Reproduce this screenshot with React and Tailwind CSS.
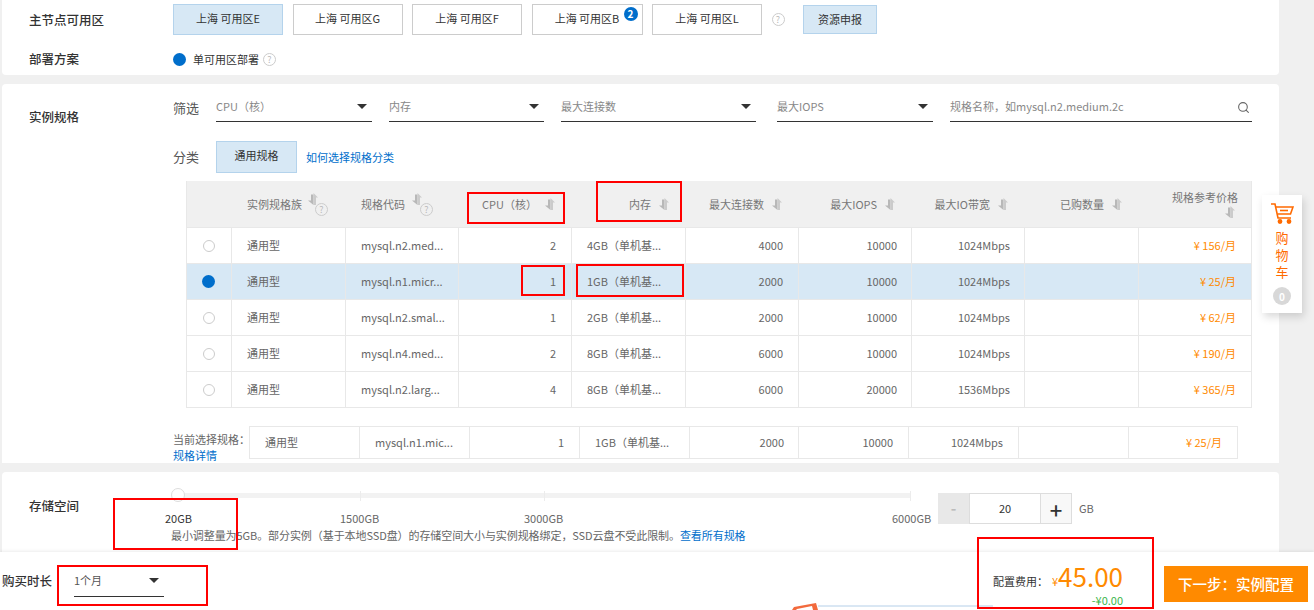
import React from "react";
import { Search } from "lucide-react";

const FONT = "font-['Noto_Sans_CJK_SC','Liberation_Sans',sans-serif]";

const zones = [
  { name: "上海 可用区E", active: true, w: "w-[110px]" },
  { name: "上海 可用区G", w: "w-[110px]" },
  { name: "上海 可用区F", w: "w-[110px]" },
  { name: "上海 可用区B", w: "w-[111px]", badge: true },
  { name: "上海 可用区L", w: "w-[110px]" },
];

const filters = [
  { label: "CPU（核）", w: "w-[156px]", gap: "mr-[17px]" },
  { label: "内存", w: "w-[155px]", gap: "mr-[17px]" },
  { label: "最大连接数", w: "w-[195px]", gap: "mr-[21px]" },
  { label: "最大IOPS", w: "w-[156px]", gap: "mr-[17px]" },
];

const rows = [
  ["通用型", "mysql.n2.med...", "2", "4GB（单机基...", "4000", "10000", "1024Mbps", "¥ 156/月"],
  ["通用型", "mysql.n1.micr...", "1", "1GB（单机基...", "2000", "10000", "1024Mbps", "¥ 25/月"],
  ["通用型", "mysql.n2.smal...", "1", "2GB（单机基...", "2000", "10000", "1024Mbps", "¥ 62/月"],
  ["通用型", "mysql.n4.med...", "2", "8GB（单机基...", "6000", "10000", "1024Mbps", "¥ 190/月"],
  ["通用型", "mysql.n2.larg...", "4", "8GB（单机基...", "6000", "20000", "1536Mbps", "¥ 365/月"],
];

const cols = "grid grid-cols-[45px_114px_113px_113px_114px_113px_113px_113px_114px_112px]";
const selCols = "grid grid-cols-[110px_110px_110px_110px_109px_110px_110px_110px_108px]";

function Help({ className = "" }) {
  return (
    <span className={`inline-flex h-[13px] w-[13px] shrink-0 items-center justify-center rounded-full border border-[#ccc] text-[9px] leading-none text-[#bbb] ${className}`}>
      ?
    </span>
  );
}

function Caret() {
  return <span className="block h-0 w-0 border-x-[5px] border-t-[5px] border-x-transparent border-t-[#333]" />;
}

function Sort({ className = "" }) {
  return (
    <svg width="10" height="13" viewBox="0 0 10 13" className={`block shrink-0 ${className}`}>
      <path d="M3 1.5h2.5V12L0 7.5h3z" fill="#b8b8b8" />
      <path d="M5.5 12V0L10 4.5H8V12z" fill="#cbcbcb" />
    </svg>
  );
}

function Annot({ className }) {
  return <div className={`absolute z-30 border-2 border-[#f00] ${className}`} />;
}

function Label({ children }) {
  return <div className="text-[12.5px] font-medium leading-5 text-[#333]">{children}</div>;
}

function HeadCell({ children, className = "" }) {
  return <div className={`flex h-[46px] items-center pl-[15px] pr-[17px] ${className}`}>{children}</div>;
}

export default function App() {
  return (
    <div className={`relative h-[610px] w-[1314px] overflow-hidden bg-[#f0f0f0] text-[11px] text-[#666] ${FONT}`}>
      <div className="ml-[2px] flex w-[1277px] flex-col gap-[9px]">
        {/* zone */}
        <section className="h-[75px] rounded-b bg-white pl-[27px]">
          <div className="flex pt-[4px]">
            <div className="w-[144px] pt-[6px]"><Label>主节点可用区</Label></div>
            <div className="flex items-center gap-[9.5px]">
              {zones.map((z) => (
                <div
                  key={z.name}
                  className={`relative flex h-[31px] items-center justify-center border pb-[3px] ${z.w} ${z.active ? "border-[#b4d3ec] bg-[#d7e8f5]" : "border-[#ccc] bg-white"} text-[#333]`}
                >
                  {z.name}
                  {z.badge && (
                    <span className="absolute right-[4px] top-[2px] flex h-[14px] w-[14px] items-center justify-center rounded-full bg-[#006ecb] text-[10px] font-bold leading-none text-white">2</span>
                  )}
                </div>
              ))}
              <Help />
              <div className="ml-[9px] flex h-[29px] w-[74px] items-center justify-center border border-[#b4d3ec] bg-[#d7e8f5] text-[#333]">资源申报</div>
            </div>
          </div>
          <div className="mt-[14px] flex items-center">
            <div className="w-[144px]"><Label>部署方案</Label></div>
            <span className="h-[13px] w-[13px] rounded-full bg-[#006ecb]" />
            <span className="ml-[7px] text-[#333]">单可用区部署</span>
            <Help className="ml-[4px]" />
          </div>
        </section>

        {/* spec */}
        <section className="h-[379px] rounded-t bg-white pl-[27px]">
          <div className="flex">
            <div className="w-[144px] pt-[23px]"><Label>实例规格</Label></div>
            <div className="w-[1079px]">
              <div className="flex items-end pt-[10px]">
                <span className="w-[43px] pb-[4px] text-[13px] leading-5 text-[#555]">筛选</span>
                {filters.map((f) => (
                  <div key={f.label} className={`flex h-[27px] items-start justify-between border-b border-[#333] pt-[3px] pr-[5px] ${f.w} ${f.gap} text-[#888]`}>
                    {f.label}
                    <span className="mt-[6px]"><Caret /></span>
                  </div>
                ))}
                <div className="flex h-[28px] w-[302px] items-start justify-between border-b border-[#333] pt-[4px] pr-[2px] text-[#888]">
                  规格名称，如mysql.n2.medium.2c
                  <Search size={13} strokeWidth={2} className="mt-[3px] text-[#666]" />
                </div>
              </div>
              <div className="mt-[19px] flex items-center">
                <span className="w-[43px] text-[13px] leading-5 text-[#555]">分类</span>
                <div className="flex h-[32px] w-[81px] items-center justify-center border border-[#b4d3ec] bg-[#d7e8f5] pb-[3px] text-[#333]">通用规格</div>
                <a className="ml-[9px] text-[#006ecb]">如何选择规格分类</a>
              </div>
              {/* table */}
              <div className="ml-[13px] mt-[8px] w-[1066px] border-x border-b border-[#e8e8e8]">
                <div className={`${cols} bg-[#f0f0f0] text-[#777]`}>
                  <HeadCell />
                  <HeadCell className="pl-[15px] pr-0">实例规格族<span className="ml-[6px] flex flex-col"><Sort /><Help className="ml-[7px] -mt-[3px]" /></span></HeadCell>
                  <HeadCell className="pr-0">规格代码<span className="ml-[7px] flex flex-col"><Sort /><Help className="ml-[8px] -mt-[3px]" /></span></HeadCell>
                  <HeadCell className="justify-end">CPU（核）<Sort className="ml-[8px]" /></HeadCell>
                  <HeadCell className="justify-end">内存<Sort className="ml-[8px]" /></HeadCell>
                  <HeadCell className="justify-end">最大连接数<Sort className="ml-[8px]" /></HeadCell>
                  <HeadCell className="justify-end">最大IOPS<Sort className="ml-[8px]" /></HeadCell>
                  <HeadCell className="justify-end">最大IO带宽<Sort className="ml-[8px]" /></HeadCell>
                  <HeadCell className="justify-end">已购数量<Sort className="ml-[8px]" /></HeadCell>
                  <div className="flex h-[46px] flex-col items-end justify-center gap-[1px] pr-[13px]">
                    规格参考价格
                    <Sort className="mr-[3px]" />
                  </div>
                </div>
                {rows.map((r, i) => (
                  <div key={i} className={`${cols} h-[36px] border-t border-[#e8e8e8] ${i === 1 ? "bg-[#d7e8f5]" : ""}`}>
                    <div className="flex items-center justify-center border-r border-[#e8e8e8] pr-px">
                      {i === 1 ? (
                        <span className="h-[13px] w-[13px] rounded-full bg-[#006ecb]" />
                      ) : (
                        <span className="h-[12px] w-[12px] rounded-full border border-[#ccc] bg-white" />
                      )}
                    </div>
                    <div className="flex items-center border-r border-[#e8e8e8] pl-[15px]">{r[0]}</div>
                    <div className="flex items-center border-r border-[#e8e8e8] pl-[15px]">{r[1]}</div>
                    <div className="flex items-center justify-end border-r border-[#e8e8e8] pr-[15px]">{r[2]}</div>
                    <div className="flex items-center border-r border-[#e8e8e8] pl-[15px]">{r[3]}</div>
                    <div className="flex items-center justify-end border-r border-[#e8e8e8] pr-[15px]">{r[4]}</div>
                    <div className="flex items-center justify-end border-r border-[#e8e8e8] pr-[14px]">{r[5]}</div>
                    <div className="flex items-center justify-end border-r border-[#e8e8e8] pr-[14px]">{r[6]}</div>
                    <div className="border-r border-[#e8e8e8]" />
                    <div className="flex items-center justify-end pr-[15px] text-[#ff8a00]">{r[7]}</div>
                  </div>
                ))}
              </div>
              {/* current selection */}
              <div className="mt-[18px] flex">
                <div className="w-[76px] whitespace-nowrap pt-[5px] leading-[16px]">
                  <div>当前选择规格：</div>
                  <a className="text-[#006ecb]">规格详情</a>
                </div>
                <div className={`${selCols} h-[33px] w-[989px] border border-[#e8e8e8]`}>
                  <div className="flex items-center border-r border-[#e8e8e8] pl-[15px]">通用型</div>
                  <div className="flex items-center border-r border-[#e8e8e8] pl-[15px]">mysql.n1.mic...</div>
                  <div className="flex items-center justify-end border-r border-[#e8e8e8] pr-[15px]">1</div>
                  <div className="flex items-center border-r border-[#e8e8e8] pl-[15px]">1GB（单机基...</div>
                  <div className="flex items-center justify-end border-r border-[#e8e8e8] pr-[14px]">2000</div>
                  <div className="flex items-center justify-end border-r border-[#e8e8e8] pr-[15px]">10000</div>
                  <div className="flex items-center justify-end border-r border-[#e8e8e8] pr-[15px]">1024Mbps</div>
                  <div className="border-r border-[#e8e8e8]" />
                  <div className="flex items-center justify-end pr-[15px] text-[#ff8a00]">¥ 25/月</div>
                </div>
              </div>
            </div>
          </div>
        </section>

        {/* storage */}
        <section className="flex h-[80px] rounded-t bg-white pl-[27px]">
          <div className="w-[144px] pt-[24px]"><Label>存储空间</Label></div>
          <div className="w-[765px] pt-[21px]">
            <div className="relative ml-[5px] h-[5px] w-[733px] bg-[#f2f2f2]">
              <span className="absolute -left-[7px] -top-[5px] h-[14px] w-[14px] rounded-full border border-[#ddd] bg-white" />
              <span className="absolute left-[182px] -top-[2px] h-[10px] w-px bg-[#ececec]" />
              <span className="absolute left-[366px] -top-[2px] h-[10px] w-px bg-[#ececec]" />
              <span className="absolute right-0 -top-[2px] h-[10px] w-px bg-[#ececec]" />
            </div>
            <div className="mt-[12px] flex whitespace-nowrap">
              <span className="-ml-[8px] w-[175px] text-[#333]">20GB</span>
              <span className="w-[184px]">1500GB</span>
              <span className="w-[368px]">3000GB</span>
              <span>6000GB</span>
            </div>
            <div className="-ml-[2px] whitespace-nowrap tracking-[-0.08px]">
              最小调整量为5GB。部分实例（基于本地SSD盘）的存储空间大小与实例规格绑定，SSD云盘不受此限制。<a className="text-[#006ecb]">查看所有规格</a>
            </div>
          </div>
          <div className="flex h-fit items-center pt-[21px]">
            <span className="flex h-[31px] w-[31px] items-center justify-center bg-[#e8e8e8] text-[15px] font-bold text-[#bbb]">-</span>
            <span className="flex h-[31px] w-[72px] items-center justify-center border border-[#ddd] text-[#333]">20</span>
            <span className="flex h-[31px] w-[31px] items-center justify-center border border-l-0 border-[#ddd] bg-[#f8f8f8] text-[22px] font-medium leading-none text-[#333]">+</span>
            <span className="ml-[7px]">GB</span>
          </div>
        </section>
      </div>

      {/* footer */}
      <footer className="absolute bottom-0 left-0 z-10 flex h-[58px] w-full items-center bg-white shadow-[0_-1px_3px_rgba(0,0,0,0.08)]">
        <span className="ml-[2px] w-[50px] text-[12.5px] font-medium text-[#333]">购买时长</span>
        <div className="ml-[22px] flex h-[31px] w-[90px] items-center justify-between border-b border-[#333] pr-[5px] text-[#555]">
          1个月
          <Caret />
        </div>
        <div className="ml-auto mr-[6px] flex h-full">
          <div className="relative mr-[41px] flex items-center">
            <span className="text-[#333]">配置费用：</span>
            <span className="ml-[4px] text-[#ff8a00]">¥</span>
            <span className="mb-[10px] text-[26px] leading-none text-[#ff8a00]">45.00</span>
            <span className="absolute bottom-[4px] right-0 text-[11px] leading-none text-[#3bb54a]">-¥0.00</span>
          </div>
          <button className="mt-[14px] flex h-[36px] w-[144px] items-center justify-center bg-[#ff8a00] text-[14.5px] font-medium text-white">下一步：实例配置</button>
        </div>
      </footer>

      {/* cart */}
      <div className="absolute left-[1262px] top-[195px] z-20 flex h-[118px] w-[40px] flex-col items-center bg-white pt-[8px] shadow-[2px_4px_8px_rgba(0,0,0,0.15)]">
        <svg width="23" height="21" viewBox="0 0 23 21" fill="none" stroke="#ff6a00" strokeWidth="1.6">
          <path d="M0 1h4l3 14h13" />
          <path d="M5 4h17l-2.5 7H6.5" />
          <path d="M9 7.5h8" />
          <circle cx="9" cy="18.5" r="1.6" fill="#ff6a00" />
          <circle cx="18" cy="18.5" r="1.6" fill="#ff6a00" />
        </svg>
        <div className="mt-[5px] w-[13px] text-[13px] leading-[17px] text-[#ff6a00]">购物车</div>
        <span className="mt-[7px] flex h-[18px] w-[18px] items-center justify-center rounded-full bg-[#d8d8d8] text-[10px] font-bold text-white">0</span>
      </div>

      {/* sliver of a popup below the footer */}
      <svg width="202" height="8" viewBox="0 0 202 8" className="absolute bottom-0 left-[792px] z-20">
        <path d="M26 4h175" stroke="#b4cfe8" strokeWidth="1" />
        <path d="M0 8l2-3 22-4 2 7z" fill="#f26a3d" />
        <path d="M4 8l1-1 15-3 1 4z" fill="#fff" />
      </svg>

      {/* annotations */}
      <Annot className="left-[467px] top-[192px] h-[32px] w-[98px]" />
      <Annot className="left-[596px] top-[181px] h-[41px] w-[86px]" />
      <Annot className="left-[521px] top-[265px] h-[31px] w-[44px]" />
      <Annot className="left-[576px] top-[264px] h-[33px] w-[108px]" />
      <Annot className="left-[113px] top-[498px] h-[52px] w-[125px]" />
      <Annot className="left-[57px] top-[565px] h-[41px] w-[151px]" />
      <Annot className="left-[977px] top-[537px] h-[72px] w-[177px]" />
    </div>
  );
}
